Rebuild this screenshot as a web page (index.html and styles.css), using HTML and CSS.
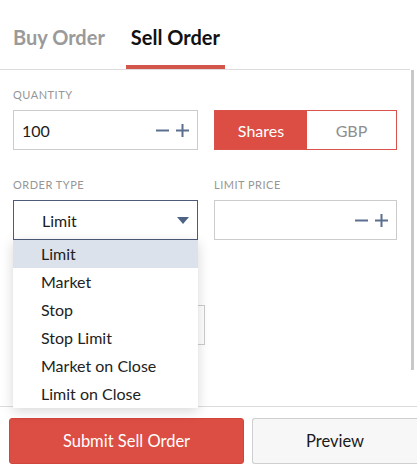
FILE: index.html
```html
<!DOCTYPE html>
<html>
<head>
<meta charset="utf-8">
<link rel="stylesheet" href="styles.css">
</head>
<body>
<div class="panel">
  <div class="tabs">
    <div class="tab">Buy Order</div>
    <div class="tab active">Sell Order</div>
  </div>
  <div class="form">
    <div class="row">
      <div class="field left">
        <div class="label">QUANTITY</div>
        <div class="input">
          <span class="value">100</span>
          <span class="steppers">
            <svg width="13" height="13" viewBox="0 0 13 13"><path d="M0 6.5h13" stroke="#5b6f8e" stroke-width="2"/></svg>
            <svg width="13" height="13" viewBox="0 0 13 13"><path d="M0 6.5h13M6.5 0v13" stroke="#5b6f8e" stroke-width="2"/></svg>
          </span>
        </div>
      </div>
      <div class="field right">
        <div class="label">&nbsp;</div>
        <div class="toggle">
          <div class="opt on">Shares</div>
          <div class="opt">GBP</div>
        </div>
      </div>
    </div>
    <div class="row">
      <div class="field left">
        <div class="label">ORDER TYPE</div>
        <div class="select-wrap">
          <div class="select">
            <span class="value">Limit</span>
            <svg class="caret" width="12" height="7" viewBox="0 0 12 7"><path d="M0 0h12L6 7z" fill="#4d6385"/></svg>
          </div>
          <ul class="menu">
            <li class="hl">Limit</li>
            <li>Market</li>
            <li>Stop</li>
            <li>Stop Limit</li>
            <li>Market on Close</li>
            <li>Limit on Close</li>
          </ul>
        </div>
      </div>
      <div class="field right">
        <div class="label">LIMIT PRICE</div>
        <div class="input">
          <span class="value"></span>
          <span class="steppers">
            <svg width="13" height="13" viewBox="0 0 13 13"><path d="M0 6.5h13" stroke="#5b6f8e" stroke-width="2"/></svg>
            <svg width="13" height="13" viewBox="0 0 13 13"><path d="M0 6.5h13M6.5 0v13" stroke="#5b6f8e" stroke-width="2"/></svg>
          </span>
        </div>
      </div>
    </div>
    <div class="hidden-box"></div>
  </div>
  <div class="scrollbar"></div>
</div>
<div class="footer">
  <button class="btn primary">Submit Sell Order</button>
  <button class="btn secondary">Preview</button>
</div>
</body>
</html>
```
FILE: styles.css
```css
* { box-sizing: border-box; }
html, body { margin: 0; padding: 0; }
body {
  width: 417px;
  height: 468px;
  overflow: hidden;
  background: #fff;
  font-family: Lato, "Open Sans", sans-serif;
  color: #1c1c1c;
}
.panel {
  position: relative;
  height: 406px;
}
.tabs {
  display: flex;
  gap: 16px;
  width: 410px;
  height: 70px;
  padding-left: 8px;
  border-bottom: 1px solid #dcdcdc;
  align-items: flex-end;
}
.tab {
  padding: 0 5px 16px;
  font-size: 20px;
  font-weight: 700;
  color: #9a9a9a;
  border-bottom: 4px solid transparent;
  line-height: 24px;
}
.tab.active {
  color: #111;
  border-bottom-color: #d4554b;
}
.form {
  padding: 18px 0 0 13px;
  width: 410px;
}
.row {
  display: flex;
  gap: 16px;
  margin-bottom: 28px;
}
.row + .row { margin-bottom: 0; }
.field { flex: 0 0 auto; }
.field.left { width: 185px; }
.field.right { width: 183px; }
.label {
  font-size: 11px;
  letter-spacing: 0.5px;
  color: #969696;
  line-height: 14px;
  height: 14px;
  margin-bottom: 8px;
}
.input {
  height: 40px;
  border: 1px solid #cccccc;
  display: flex;
  align-items: center;
  justify-content: space-between;
  padding: 0 8px 0 8px;
  font-size: 16px;
}
.steppers { display: flex; gap: 7px; }
.toggle {
  display: flex;
  height: 40px;
  border: 1px solid #d9534a;
  font-size: 16px;
}
.opt {
  flex: 1;
  display: flex;
  align-items: center;
  justify-content: center;
  color: #8e8e8e;
}
.opt.on {
  background: #dc4e44;
  color: #fff;
  flex: 0 0 92px;
}
.select-wrap { position: relative; }
.select {
  height: 40px;
  border: 1px solid #4b5b78;
  display: flex;
  align-items: center;
  justify-content: space-between;
  padding: 0 8px 0 28px;
  font-size: 16px;
}
.menu {
  position: absolute;
  top: 40px;
  left: 0;
  width: 185px;
  margin: 0;
  padding: 0;
  list-style: none;
  background: #fff;
  box-shadow: 0 3px 12px rgba(0,0,0,0.16);
  z-index: 5;
}
.menu li {
  height: 28px;
  line-height: 28px;
  padding-left: 28px;
  font-size: 16px;
  color: #222;
}
.menu li.hl { background: #dce2ec; }
.hidden-box {
  margin-top: 65px;
  width: 192px;
  height: 40px;
  border: 1px solid #cccccc;
}
.scrollbar {
  position: absolute;
  right: 3px;
  top: 70px;
  width: 3px;
  height: 300px;
  background: #c8c8c8;
}
.footer {
  border-top: 1px solid #dcdcdc;
  display: flex;
  gap: 8px;
  padding: 11px 0 0 9px;
  overflow: hidden;
}
.btn {
  height: 46px;
  border-radius: 3px;
  font-family: Lato, "Open Sans", sans-serif;
  font-size: 16.5px;
  cursor: pointer;
}
.btn.primary {
  flex: 0 0 235px;
  background: #dc4d43;
  border: 1px solid #d0463c;
  color: #fff;
}
.btn.secondary {
  flex: 0 0 165px;
  background: #f7f7f7;
  border: 1px solid #cfcfcf;
  border-right: none;
  border-radius: 3px 0 0 3px;
  color: #1a1a1a;
}
```
